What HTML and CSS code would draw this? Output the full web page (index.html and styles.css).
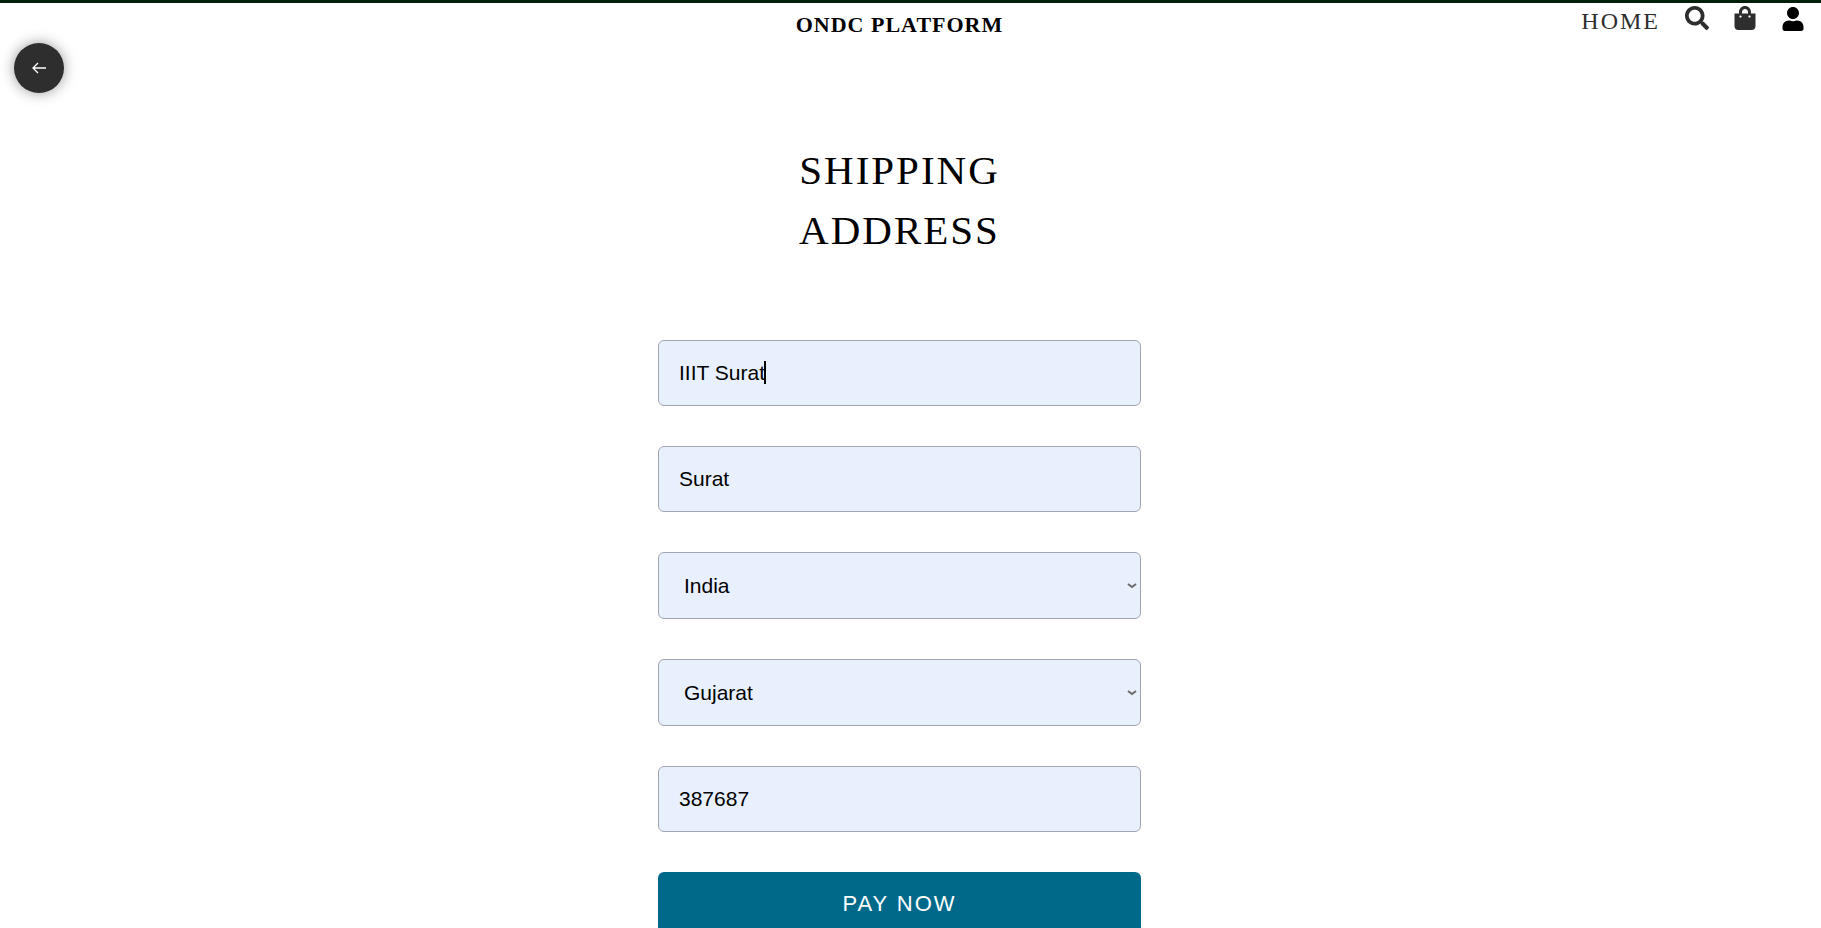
FILE: index.html
```html
<!DOCTYPE html>
<html lang="en">
<head>
<meta charset="utf-8">
<title>ONDC Platform</title>
<link rel="stylesheet" href="styles.css">
</head>
<body>
<header class="site-header">
  <button class="back" type="button" aria-label="Back">
    <svg viewBox="0 0 14 12" width="14" height="12"><path d="M6 1L1 6l5 5M1 6h13"/></svg>
  </button>
  <h2 class="brand">ONDC PLATFORM</h2>
  <nav class="nav">
    <a class="home" href="#">HOME</a>
    <a class="icon" href="#" aria-label="Search"><svg viewBox="0 0 512 512" width="24" height="24"><path d="M505 442.7L405.3 343c-4.5-4.5-10.6-7-17-7H372c27.6-35.3 44-79.700 44-128C416 93.100 322.900 0 208 0S0 93.100 0 208s93.100 208 208 208c48.300 0 92.700-16.400 128-44v16.300c0 6.400 2.500 12.500 7 17l99.700 99.700c9.400 9.400 24.600 9.400 33.900 0l28.300-28.300c9.400-9.400 9.400-24.600.1-34zM208 336c-70.700 0-128-57.200-128-128 0-70.700 57.200-128 128-128 70.700 0 128 57.200 128 128 0 70.700-57.200 128-128 128z"/></svg></a>
    <a class="icon" href="#" aria-label="Shopping bag"><svg viewBox="0 0 448 512" width="22" height="24"><path d="M352 160v-32C352 57.420 294.579 0 224 0 153.420 0 96 57.420 96 128v32H0v272c0 44.183 35.817 80 80 80h288c44.183 0 80-35.817 80-80V160h-96zm-192-32c0-35.290 28.710-64 64-64s64 28.710 64 64v32H160v-32zm160 120c-13.255 0-24-10.745-24-24s10.745-24 24-24 24 10.745 24 24-10.745 24-24 24zm-192 0c-13.255 0-24-10.745-24-24s10.745-24 24-24 24 10.745 24 24-10.745 24-24 24z"/></svg></a>
    <a class="icon account" href="#" aria-label="Account"><svg viewBox="0 0 448 512" width="22" height="24"><path d="M224 256c70.700 0 128-57.300 128-128S294.700 0 224 0 96 57.300 96 128s57.300 128 128 128zm89.600 32h-16.700c-22.200 10.200-46.900 16-72.900 16s-50.600-5.800-72.900-16h-16.700C60.200 288 0 348.200 0 422.400V464c0 26.500 21.500 48 48 48h352c26.500 0 48-21.500 48-48v-41.600c0-74.200-60.200-134.400-134.400-134.400z"/></svg></a>
  </nav>
</header>
<main class="page">
  <h1 class="title">SHIPPING<br>ADDRESS</h1>
  <form class="form">
    <div class="field">
      <input class="control" type="text" aria-label="Address" value="IIIT Surat">
      <span class="caret"></span>
    </div>
    <div class="field"><input class="control" type="text" aria-label="City" value="Surat"></div>
    <div class="field">
      <select class="control select" aria-label="Country"><option>India</option></select>
      <svg class="chevron" viewBox="0 0 10 6" width="10" height="6"><path d="M1 1l4 3 4-3"/></svg>
    </div>
    <div class="field">
      <select class="control select" aria-label="State"><option>Gujarat</option></select>
      <svg class="chevron" viewBox="0 0 10 6" width="10" height="6"><path d="M1 1l4 3 4-3"/></svg>
    </div>
    <div class="field"><input class="control" type="text" aria-label="Pin code" value="387687"></div>
    <button class="pay" type="button">PAY NOW</button>
  </form>
</main>
</body>
</html>
```
FILE: styles.css
```css
* { box-sizing: border-box; }
body {
  margin: 0;
  border-top: 3px solid #001f0a;
  background: #fff;
  color: #000;
  font-family: "Liberation Serif", "Times New Roman", serif;
}
html { overflow: hidden; }
.site-header {
  position: relative;
  display: grid;
  grid-template-columns: 1fr auto 1fr;
  align-items: start;
  height: 57px;
  margin-right: 22px;
}
.brand {
  grid-column: 2;
  margin: 9px 0 0;
  font-size: 22px;
  line-height: 26px;
  letter-spacing: 1px;
}
.nav {
  display: flex;
  justify-content: flex-end;
  gap: 25px;
  margin-right: -5px;
  padding-top: 3px;
}
.home {
  padding-top: 2px;
  color: #2e2e2e;
  font-size: 24px;
  line-height: 26px;
  letter-spacing: 2px;
  text-decoration: none;
}
.icon { color: #2e2e2e; height: 24px; }
.icon svg { display: block; fill: currentColor; }
.account { color: #000; margin: 1px 0 0 1px; }
.back {
  position: absolute;
  left: 14px;
  top: 40px;
  display: flex;
  align-items: center;
  justify-content: center;
  width: 50px;
  height: 50px;
  padding: 0;
  border: 0;
  border-radius: 50%;
  background: #2e2e2e;
  box-shadow: 0 0 14px rgba(0, 0, 0, 0.4);
}
.back svg { fill: none; stroke: #fff; stroke-width: 1.3; }
.page {
  display: flex;
  flex-direction: column;
  align-items: center;
  padding: 80px 22px 40px 0;
}
.title {
  margin: 0 0 80px;
  font-size: 41px;
  font-weight: 400;
  line-height: 60px;
  letter-spacing: 2px;
  text-align: center;
}
.form {
  display: flex;
  flex-direction: column;
  gap: 40px;
  width: 483px;
  max-width: 100%;
}
.field { position: relative; display: flex; }
.control {
  width: 100%;
  padding: 20px;
  border: 1px solid #a0a5b1;
  border-radius: 6px;
  outline: 0;
  background: #e8f0fe;
  color: #000;
  font: 21px/24px "Liberation Sans", Arial, sans-serif;
}
.select {
  appearance: none;
  min-height: 67px;
  padding-left: 25px;
}
.caret {
  position: absolute;
  left: 106px;
  top: 21px;
  width: 2px;
  height: 23px;
  background: #000;
}
.chevron {
  position: absolute;
  right: 4px;
  top: 31px;
  fill: none;
  stroke: #6a6a6a;
  stroke-width: 2;
  pointer-events: none;
}
.pay {
  padding: 20px;
  border: 0;
  border-radius: 6px;
  background: #00698a;
  color: #fff;
  font: 22px/24px "Liberation Sans", Arial, sans-serif;
  letter-spacing: 2px;
}
```
